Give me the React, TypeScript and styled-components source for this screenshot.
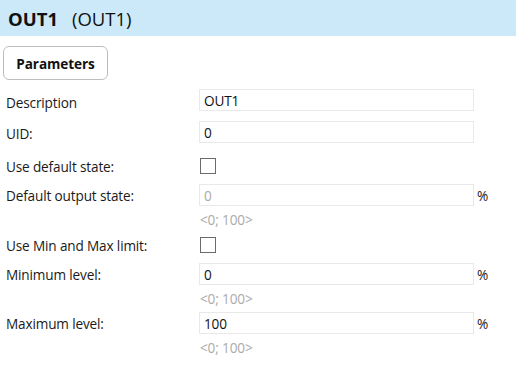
import * as React from 'react';
import styled, { createGlobalStyle } from 'styled-components';

const GlobalStyle = createGlobalStyle`
    html, body {
        margin: 0;
        padding: 0;
        background: #fff;
    }
    body {
        font-family: "Open Sans", "Noto Sans", "Liberation Sans", sans-serif;
        font-size: 13.6px;
        letter-spacing: -0.15px;
        color: #1a1a1a;
    }
`;

const Page = styled.div`
    width: 516px;
    height: 388px;
    overflow: hidden;
`;

const Header = styled.div`
    height: 36px;
    background: #cce9fa;
    display: flex;
    align-items: center;
    padding-left: 8px;
    font-size: 18.5px;
    letter-spacing: 0;
    color: #111;

    .name {
        font-weight: 700;
        margin-right: 14px;
    }
`;

const Tabs = styled.div`
    padding: 10px 0 0 3px;
    display: flex;
`;

const TabButton = styled.button`
    height: 34px;
    width: 105px;
    border: 1px solid #bdbdbd;
    border-radius: 6px;
    background: #fff;
    font-family: inherit;
    font-size: 13.6px;
    letter-spacing: -0.1px;
    font-weight: 700;
    color: #111;
    padding: 0;
    cursor: pointer;
`;

const Form = styled.div`
    display: flex;
    flex-direction: column;
    padding-top: 9px;
`;

const Row = styled.div<{ $gap: number }>`
    display: grid;
    grid-template-columns: 193px 1fr;
    padding-left: 6px;
    margin-top: ${p => p.$gap}px;
`;

const Label = styled.div<{ $shift?: number; $h: number }>`
    height: ${p => p.$h}px;
    display: flex;
    align-items: center;
    padding-top: ${p => (p.$shift || 0) * 2}px;
    box-sizing: border-box;
    white-space: nowrap;
`;

const Value = styled.div`
    display: flex;
    flex-direction: column;
`;

const Line = styled.div`
    display: flex;
    align-items: center;
`;

const Input = styled.div<{ $disabled?: boolean }>`
    width: 275px;
    height: 22px;
    box-sizing: border-box;
    border: 1px solid #e9e9e9;
    padding-left: 4px;
    display: flex;
    align-items: center;
    color: ${p => (p.$disabled ? '#a8a8a8' : '#111')};
`;

const Unit = styled.span`
    margin-left: 3px;
    color: #222;
`;

const Hint = styled.div`
    height: 20px;
    margin-top: 3px;
    padding-left: 1px;
    display: flex;
    align-items: center;
    color: #ababab;
`;

const Check = styled.div`
    width: 16px;
    height: 16px;
    box-sizing: border-box;
    border: 1px solid #6b6b6b;
    background: #fff;
    margin-left: 1px;
`;

interface IField {
    label: string;
    kind: 'text' | 'check';
    value?: string;
    unit?: string;
    hint?: string;
    disabled?: boolean;
    gap: number;
    shift?: number;
}

const fields: IField[] = [
    { label: 'Description', kind: 'text', value: 'OUT1', gap: 0, shift: 2 },
    { label: 'UID:', kind: 'text', value: '0', gap: 10, shift: 1.5 },
    { label: 'Use default state:', kind: 'check', gap: 15 },
    { label: 'Default output state:', kind: 'text', value: '0', unit: '%', hint: '<0; 100>', disabled: true, gap: 10 },
    { label: 'Use Min and Max limit:', kind: 'check', gap: 8 },
    { label: 'Minimum level:', kind: 'text', value: '0', unit: '%', hint: '<0; 100>', gap: 10 },
    { label: 'Maximum level:', kind: 'text', value: '100', unit: '%', hint: '<0; 100>', gap: 4 }
];

export default function App() {
    return (
        <Page>
            <GlobalStyle />
            <Header>
                <span className="name">OUT1</span>
                <span>(OUT1)</span>
            </Header>
            <Tabs>
                <TabButton>Parameters</TabButton>
            </Tabs>
            <Form>
                {fields.map(f => (
                    <Row key={f.label} $gap={f.gap}>
                        <Label $h={f.kind === 'check' ? 16 : 22} $shift={f.shift}>{f.label}</Label>
                        <Value>
                            {f.kind === 'check' ? (
                                <Check />
                            ) : (
                                <Line>
                                    <Input $disabled={f.disabled}>{f.value}</Input>
                                    {f.unit && <Unit>{f.unit}</Unit>}
                                </Line>
                            )}
                            {f.hint && <Hint>{f.hint}</Hint>}
                        </Value>
                    </Row>
                ))}
            </Form>
        </Page>
    );
}
